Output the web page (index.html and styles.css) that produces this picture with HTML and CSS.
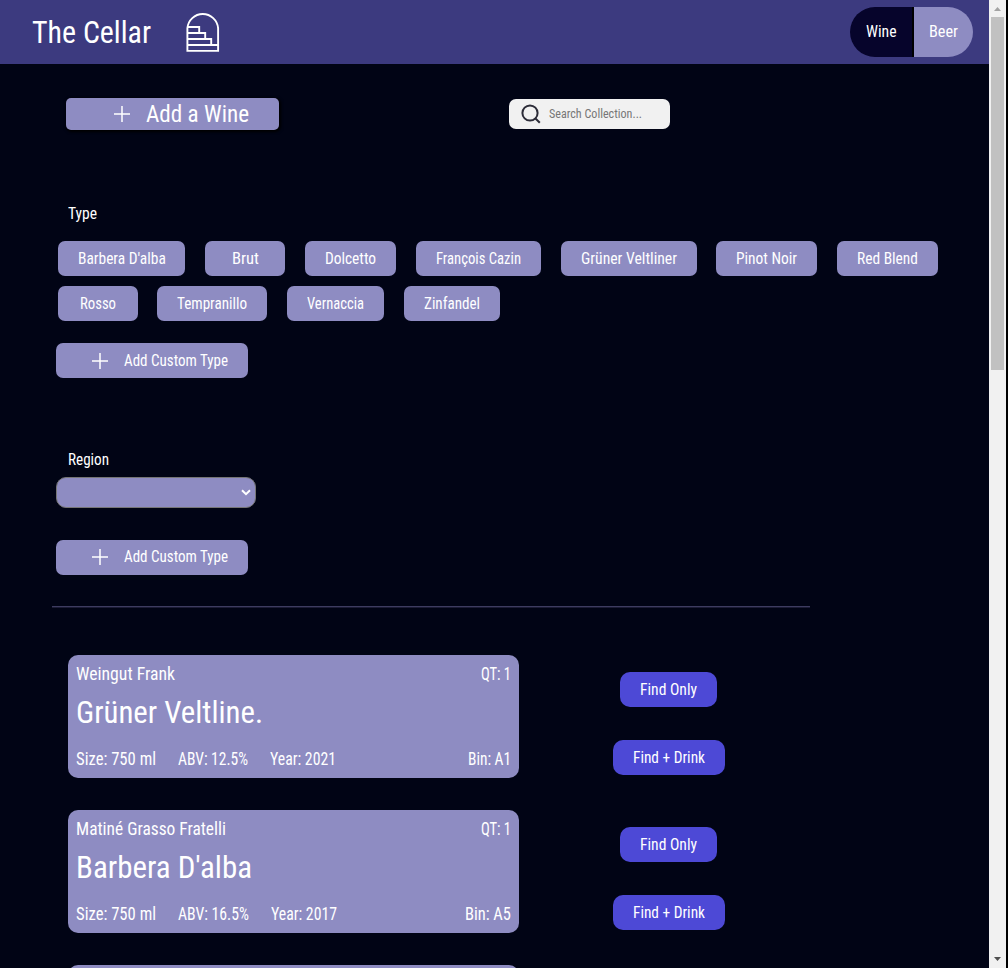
FILE: index.html
```html
<!DOCTYPE html>
<html lang="en">
<head>
<meta charset="utf-8">
<title>The Cellar</title>
<link rel="stylesheet" href="styles.css">
</head>
<body>
<div class="window">
  <div class="page">
    <header class="header">
      <h1 class="brand"><span data-w="119">The Cellar</span></h1>
      <svg class="logo" viewBox="0 0 34 42" fill="none" stroke="#fff" stroke-width="1.9"><path d="M1.4 39.9V17.2A15.4 15.4 0 0 1 32.1 17.2V39.9Z"/><path d="M1.4 16H13.2V22M1.4 22H19.2V28M1.4 28H25.2V34M1.4 34H32.1"/></svg>
      <nav class="toggle">
        <button class="toggle-item toggle-on"><span data-w="30.5">Wine</span></button>
        <button class="toggle-item toggle-off"><span data-w="29">Beer</span></button>
      </nav>
    </header>
    <main class="main">
      <div class="tools">
        <button class="add-wine"><svg class="plus" viewBox="0 0 16 16"><path d="M8 0V16M0 8H16"/></svg><span data-w="103">Add a Wine</span></button>
        <div class="search">
          <svg class="search-icon" viewBox="0 0 20 20" fill="none" stroke="#2c2c38" stroke-width="2"><circle cx="9" cy="9" r="7.6"/><path d="M14.2 14.2L18.8 18.8"/></svg>
          <span data-w="93">Search Collection...</span>
        </div>
      </div>
      <h2 class="label"><span data-w="29">Type</span></h2>
      <div class="chips">
        <button class="chip"><span data-w="87.8">Barbera D'alba</span></button>
        <button class="chip"><span data-w="27">Brut</span></button>
        <button class="chip"><span data-w="51">Dolcetto</span></button>
        <button class="chip"><span data-w="85">François Cazin</span></button>
        <button class="chip"><span data-w="96">Grüner Veltliner</span></button>
        <button class="chip"><span data-w="61">Pinot Noir</span></button>
        <button class="chip"><span data-w="61">Red Blend</span></button>
        <button class="chip"><span data-w="36">Rosso</span></button>
        <button class="chip"><span data-w="70">Tempranillo</span></button>
        <button class="chip"><span data-w="57">Vernaccia</span></button>
        <button class="chip"><span data-w="56">Zinfandel</span></button>
      </div>
      <button class="add-custom"><svg class="plus" viewBox="0 0 16 16"><path d="M8 0V16M0 8H16"/></svg><span data-w="104">Add Custom Type</span></button>
      <h2 class="label label-region"><span data-w="41">Region</span></h2>
      <div class="select"><svg class="chevron" viewBox="0 0 10 7"><path d="M1 1.2L5 5.2L9 1.2"/></svg></div>
      <button class="add-custom add-region"><svg class="plus" viewBox="0 0 16 16"><path d="M8 0V16M0 8H16"/></svg><span data-w="104">Add Custom Type</span></button>
      <hr class="rule">
      <section class="list">
        <div class="row">
          <article class="card">
            <div class="line"><span data-w="99">Weingut Frank</span><span class="end" data-w="30">QT: 1</span></div>
            <h3 class="name"><span data-w="187">Grüner Veltline.</span></h3>
            <div class="line"><span data-w="80">Size: 750 ml</span><span data-w="70">ABV: 12.5%</span><span data-w="66">Year: 2021</span><span class="end" data-w="43">Bin: A1</span></div>
          </article>
          <div class="actions"><button class="find"><span data-w="57">Find Only</span></button><button class="find"><span data-w="72">Find + Drink</span></button></div>
        </div>
        <div class="row">
          <article class="card">
            <div class="line"><span data-w="150">Matiné Grasso Fratelli</span><span class="end" data-w="30">QT: 1</span></div>
            <h3 class="name"><span data-w="176">Barbera D'alba</span></h3>
            <div class="line"><span data-w="80">Size: 750 ml</span><span data-w="71">ABV: 16.5%</span><span data-w="66">Year: 2017</span><span class="end" data-w="46">Bin: A5</span></div>
          </article>
          <div class="actions"><button class="find"><span data-w="57">Find Only</span></button><button class="find"><span data-w="72">Find + Drink</span></button></div>
        </div>
        <div class="row"><article class="card"></article></div>
      </section>
    </main>
  </div>
  <div class="scrollbar">
    <svg class="arrow" viewBox="0 0 17 17"><path d="M5 11H12L8.5 7Z" fill="#a3a3a3"/></svg>
    <div class="thumb"></div>
    <svg class="arrow arrow-down" viewBox="0 0 17 17"><path d="M5 6H12L8.5 10Z" fill="#505050"/></svg>
  </div>
</div>
<script src="fit.js"></script>
</body>
</html>
```
FILE: styles.css
```css
* { box-sizing: border-box; }
body { margin: 0; background: #000; color: #fff; font: 450 16px/20px Roboto, "Open Sans", sans-serif; font-stretch: 75%; }
.window { display: flex; width: 1008px; height: 968px; overflow: hidden; }
.page { width: 989px; height: 968px; background: #010415; overflow: hidden; }
button { display: flex; align-items: center; justify-content: center; font: inherit; font-stretch: inherit; color: #fff; border: 0; margin: 0; padding: 0; flex: none; }
h1, h2, h3 { margin: 0; font-weight: 450; }
[data-w] { display: inline-block; flex: none; white-space: nowrap; text-align: left; }
.fit { display: inline-block; transform-origin: 0 50%; }
.header { display: flex; align-items: center; height: 64px; padding: 0 16px 0 31.5px; background: #3c3a7f; }
.brand { font-size: 32px; line-height: 40px; height: 40px; }
.logo { width: 34px; height: 42px; margin-left: 35px; }
.toggle { display: flex; height: 50px; margin-left: auto; border-radius: 25px; overflow: hidden; }
.toggle-item { height: 50px; }
.toggle-on { width: 64px; background: #06042b; border-right: 2px solid #000; }
.toggle-off { width: 59px; background: #8e8cc2; }
.main { padding: 34px 0 0 52px; }
.tools { display: flex; align-items: center; height: 32px; padding-left: 14px; }
.add-wine { width: 213px; height: 32px; padding-left: 17px; gap: 16px; font-size: 24px; background: #8e8cc2; border-radius: 5px; box-shadow: 1px 1px 3px 1px #000; }
.plus { width: 16px; height: 16px; fill: none; stroke: #fff; stroke-width: 1.5; flex: none; }
.search { display: flex; align-items: center; width: 161px; height: 30px; margin-left: 230px; padding-left: 12px; gap: 8px; background: #f1f1f1; border-radius: 7px; color: #777; font-size: 13.33px; }
.search-icon { width: 20px; height: 20px; flex: none; }
.label { margin: 74px 0 0 15.5px; height: 20px; font-size: 16px; line-height: 20px; }
.chips { display: flex; flex-wrap: wrap; gap: 10px 19.8px; width: 900px; margin: 17px 0 0 5.7px; }
.chip { min-width: 80px; height: 35px; padding: 0 20px; background: #8e8cc2; border-radius: 7px; }
.add-custom { width: 191.5px; height: 35px; margin: 22px 0 0 4px; padding-left: 16px; gap: 16px; background: #8e8cc2; border-radius: 7px; }
.label-region { margin-top: 72px; }
.select { display: flex; align-items: center; justify-content: flex-end; width: 199.5px; height: 31px; margin: 6.5px 0 0 4px; padding-right: 4px; background: #8e8cc2; border: 1px solid #767676; border-radius: 10px; }
.chevron { width: 10px; height: 7px; fill: none; stroke: #fff; stroke-width: 2; }
.add-region { margin-top: 32px; }
.rule { width: 758px; height: 2px; margin: 31.5px 0 0; border: 0; border-bottom: 1px solid #1b1b35; background: #3d3c60; }
.list { display: flex; flex-direction: column; gap: 32px; margin: 47.4px 0 0 16px; }
.row { display: flex; height: 123px; }
.card { display: flex; flex-direction: column; width: 451px; height: 123px; padding: 7.6px 8px 8px 7.6px; background: #8e8cc2; border-radius: 10px; flex: none; }
.line { display: flex; gap: 22px; height: 22px; font-size: 18px; line-height: 22px; }
.end { margin-left: auto; }
.name { height: 40px; margin: 7.5px 0 15.5px; font-size: 32px; line-height: 40px; }
.actions { display: flex; flex-direction: column; align-items: center; gap: 33px; width: 299px; padding-top: 17px; }
.find { height: 35px; padding: 0 20px; background: #4d49d6; border-radius: 10px; }
.scrollbar { display: flex; flex-direction: column; align-items: center; width: 17px; height: 968px; background: #f1f1f1; }
.arrow { width: 17px; height: 17px; flex: none; }
.thumb { width: 13px; height: 353px; background: #c1c1c1; }
.arrow-down { margin-top: auto; }
```
FILE: fit.js
```js
// Condense each label horizontally to its data-w width.
document.querySelectorAll('[data-w]').forEach(function (el) {
  var inner = document.createElement('span');
  inner.className = 'fit';
  inner.textContent = el.textContent;
  el.textContent = '';
  el.appendChild(inner);
  var width = parseFloat(el.dataset.w);
  var natural = inner.getBoundingClientRect().width;
  el.style.width = width + 'px';
  inner.style.transform = 'scaleX(' + width / natural + ')';
});
```
